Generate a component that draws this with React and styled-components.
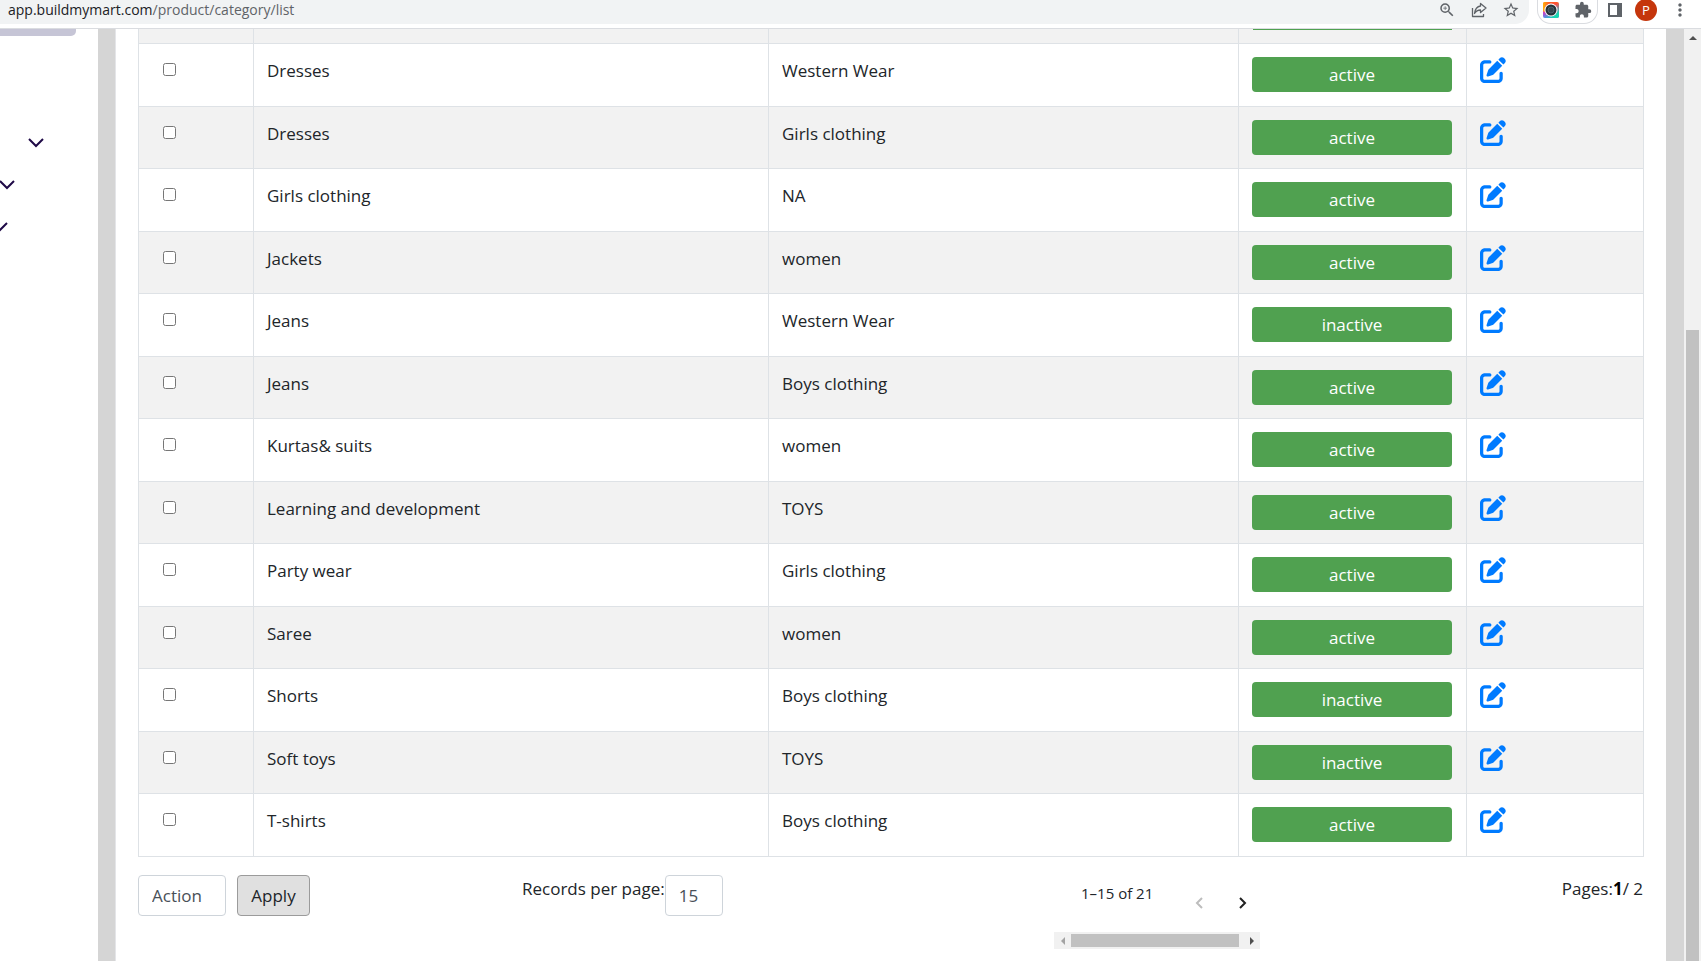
import React from "react";
import styled, { createGlobalStyle } from "styled-components";
import { MdZoomIn, MdStarBorder, MdExtension, MdMoreVert } from "react-icons/md";
import { FaPenToSquare } from "react-icons/fa6";

const GlobalStyle = createGlobalStyle`
  *, *::before, *::after { box-sizing: border-box; }
  body {
    margin: 0;
    background: #fff;
    color: #212529;
    font-family: "Open Sans", "Noto Sans", sans-serif;
    font-size: 17px;
    line-height: 27px;
  }
  button, select, input { font: inherit; }
`;

const Page = styled.div`
  display: flex;
  flex-direction: column;
  height: 100vh;
  overflow: hidden;
`;

const Toolbar = styled.header`
  display: flex;
  flex: none;
  align-items: flex-start;
  height: 29px;
  border-bottom: 1px solid #dadce0;
  color: #5f6368;
`;

const AddressBar = styled.div`
  display: flex;
  flex: 1;
  align-items: center;
  justify-content: space-between;
  height: 24px;
  padding: 0 9px 4px 8px;
  background: #f1f3f4;
  border-bottom-right-radius: 14px;
  font-size: 14px;
  line-height: 20px;
`;

const Host = styled.span`
  color: #202124;
`;

const IconGroup = styled.div`
  display: flex;
  align-items: center;
  gap: ${(p) => p.$gap}px;
`;

const IconButton = styled.button`
  display: flex;
  flex: none;
  padding: 0;
  border: 0;
  background: none;
  color: inherit;
`;

const ExtensionPill = styled.div`
  display: flex;
  align-items: center;
  gap: 15px;
  height: 24px;
  margin-left: 8px;
  padding: 0 5px 4px;
  border: 1px solid #dadce0;
  border-top: 0;
  border-radius: 0 0 14px 14px;
`;

const WindowActions = styled.div`
  display: flex;
  align-items: center;
  height: 20px;
  gap: 13px;
  padding: 0 11px 0 10px;
`;

const Avatar = styled.button`
  width: 22px;
  height: 22px;
  padding: 0;
  border: 0;
  border-radius: 50%;
  background: #c5360c;
  color: #fff;
  font-size: 13px;
  line-height: 20px;
`;

const Workspace = styled.div`
  display: flex;
  flex: 1;
  min-height: 0;
  background: #d5d5d5;
`;

const Sidebar = styled.nav`
  flex: none;
  width: 98px;
  overflow: hidden;
  background: #fff;
`;

const ActiveItem = styled.div`
  width: 76px;
  height: 7px;
  margin-bottom: 86px;
  background: #c6c5d6;
  border-bottom-right-radius: 5px;
`;

const MenuToggle = styled.button`
  display: flex;
  align-items: center;
  justify-content: flex-end;
  width: ${(p) => p.$width}px;
  height: 42px;
  padding: 0;
  border: 0;
  background: none;
  color: #1f0a47;
`;

const MenuChevron = styled.svg`
  flex: none;
  width: 16px;
  height: 10px;
`;

const Card = styled.main`
  flex: 1;
  min-width: 0;
  margin: 0 18px 0 17px;
  padding: 0 22px;
  overflow: hidden;
  background: #fff;
  border-left: 1px solid #e4e5e8;
  border-right: 1px solid #fff;
`;

const Table = styled.table`
  width: 100%;
  table-layout: fixed;
  border-collapse: separate;
  border-spacing: 0;
  border-left: 1px solid #dee2e6;
`;

const Row = styled.tr`
  height: 62px;
  &:nth-child(even) { height: 63px; }
  &:nth-child(odd) { background: #f2f2f2; }
`;

const CutRow = styled(Row)`
  height: 15px !important;
`;

const Cell = styled.td`
  padding: ${(p) => p.$pad || "13px"};
  vertical-align: top;
  border-right: 1px solid #dee2e6;
  border-bottom: 1px solid #dee2e6;
`;

const CutBadge = styled.div`
  height: 1px;
  margin: 0 1px;
  background: #50a150;
`;

const Checkbox = styled.input`
  display: block;
  width: 13px;
  height: 13px;
  margin: 0;
`;

const StatusButton = styled.button`
  display: flex;
  justify-content: center;
  width: 100%;
  height: 35px;
  padding: 4px 0;
  border: 0;
  border-radius: 4px;
  background: #50a150;
  color: #fff;
  line-height: 27px;
`;

const EditLink = styled.a`
  display: block;
  width: 26px;
  color: #007bff;
`;

const Footer = styled.footer`
  display: grid;
  grid-template-columns: 384fr 532fr 206fr 383fr;
  align-items: start;
  padding-top: 18px;
`;

const Bulk = styled.div`
  display: flex;
  gap: 11px;
`;

const Select = styled.select`
  width: ${(p) => p.$width}px;
  height: 41px;
  padding: 0 0 0 13px;
  appearance: none;
  border: 1px solid #ced4da;
  border-radius: 4px;
  background: #fff;
  color: #495057;
`;

const ApplyButton = styled.button`
  width: 73px;
  height: 41px;
  padding: 0;
  border: 1px solid #9b9b9b;
  border-radius: 4px;
  background: #e0e0e0;
  color: #212529;
`;

const PageSize = styled.div`
  display: flex;
`;

const Pager = styled.div`
  display: flex;
  flex-direction: column;
`;

const PagerRow = styled.div`
  display: flex;
  align-items: flex-start;
  height: 57px;
  padding: 5px 13px 0 27px;
`;

const Range = styled.span`
  flex: 1;
  font-size: 15px;
  white-space: nowrap;
`;

const PagerButtons = styled(IconGroup)`
  padding-top: 17px;
`;

const Track = styled.div`
  display: flex;
  align-items: center;
  height: 17px;
  background: #f1f1f1;
`;

const ArrowBox = styled.span`
  display: flex;
  flex: none;
  align-items: center;
  justify-content: center;
  width: 17px;
  height: 17px;
`;

const HorizontalThumb = styled.div`
  flex: 1;
  height: 13px;
  margin-right: 4px;
  background: #c1c1c1;
`;

const PageCount = styled.div`
  text-align: right;
`;

const Current = styled.b`
  color: #000;
`;

const VerticalTrack = styled.div`
  display: flex;
  flex: none;
  flex-direction: column;
  align-items: center;
  gap: 284px;
  width: 17px;
  background: #f1f1f1;
`;

const VerticalThumb = styled.div`
  flex: 1;
  width: 13px;
  background: #c1c1c1;
`;

const rows = [
  ["Dresses", "Western Wear", "active"],
  ["Dresses", "Girls clothing", "active"],
  ["Girls clothing", "NA", "active"],
  ["Jackets", "women", "active"],
  ["Jeans", "Western Wear", "inactive"],
  ["Jeans", "Boys clothing", "active"],
  ["Kurtas& suits", "women", "active"],
  ["Learning and development", "TOYS", "active"],
  ["Party wear", "Girls clothing", "active"],
  ["Saree", "women", "active"],
  ["Shorts", "Boys clothing", "inactive"],
  ["Soft toys", "TOYS", "inactive"],
  ["T-shirts", "Boys clothing", "active"],
];

const columnWidths = [115, 515, 470, 228, 177];

function Chevron() {
  return (
    <MenuChevron viewBox="0 0 16 10" fill="none" stroke="currentColor" strokeWidth="2">
      <path d="M1 1l7 7 7-7" />
    </MenuChevron>
  );
}

function ShareIcon() {
  return (
    <svg width="16" height="16" viewBox="0 0 16 16" fill="none" stroke="currentColor" strokeWidth="1.3" strokeLinejoin="round">
      <path d="M1.500 6v8.500h11V12" />
      <path d="M9.500 1.500L15 6l-5.500 4.500V8C7 8 5 9 3.500 11.500 4 7.500 6 4.500 9.500 4z" />
    </svg>
  );
}

function CameraIcon() {
  return (
    <svg width="16" height="16" viewBox="0 0 16 16">
      <defs>
        <linearGradient id="rainbow" x1="0" y1="0" x2="0" y2="1">
          <stop offset="0" stopColor="#ff5a1f" />
          <stop offset="0.500" stopColor="#f0329b" />
          <stop offset="1" stopColor="#6f6cff" />
        </linearGradient>
        <linearGradient id="left-side" x1="0" y1="0" x2="1" y2="0">
          <stop offset="0" stopColor="#ffb300" />
          <stop offset="0.400" stopColor="#ffb300" stopOpacity="0" />
        </linearGradient>
        <linearGradient id="corner" x1="0.500" y1="0.400" x2="1" y2="1">
          <stop offset="0" stopColor="#18d8b0" stopOpacity="0" />
          <stop offset="0.700" stopColor="#18d8b0" />
        </linearGradient>
      </defs>
      <rect width="16" height="16" rx="2" fill="url(#rainbow)" />
      <rect width="16" height="10" rx="2" fill="url(#left-side)" />
      <rect width="16" height="16" rx="2" fill="url(#corner)" />
      <circle cx="8" cy="8" r="6.500" fill="#fff" />
      <circle cx="8" cy="8" r="5.500" fill="#263238" />
      <circle cx="8" cy="8" r="3" fill="#37474f" stroke="#546e7a" strokeWidth="0.700" />
    </svg>
  );
}

function PanelIcon() {
  return (
    <svg width="14" height="14" viewBox="0 0 14 14">
      <path fill="currentColor" fillRule="evenodd" d="M0 0h14v14H0zM2 2v10h7V2z" />
    </svg>
  );
}

function PagerChevron({ flip, color }) {
  return (
    <svg width="8" height="12" viewBox="0 0 8 12" fill="none" stroke={color} strokeWidth="2">
      <path d={flip ? "M1 1l5 5-5 5" : "M7 1L2 6l5 5"} />
    </svg>
  );
}

function Triangle({ points, color }) {
  return (
    <svg width="8" height="8" viewBox="0 0 8 8">
      <polygon points={points} fill={color} />
    </svg>
  );
}

export default function App() {
  return (
    <Page>
      <GlobalStyle />
      <Toolbar>
        <AddressBar>
          <span>
            <Host>app.buildmymart.com</Host>/product/category/list
          </span>
          <IconGroup $gap={15}>
            <IconButton aria-label="Zoom"><MdZoomIn size={18} /></IconButton>
            <IconButton aria-label="Share"><ShareIcon /></IconButton>
            <IconButton aria-label="Bookmark"><MdStarBorder size={18} /></IconButton>
          </IconGroup>
        </AddressBar>
        <ExtensionPill>
          <IconButton aria-label="Capture"><CameraIcon /></IconButton>
          <IconButton aria-label="Extensions"><MdExtension size={18} /></IconButton>
        </ExtensionPill>
        <WindowActions>
          <IconButton aria-label="Side panel"><PanelIcon /></IconButton>
          <Avatar>P</Avatar>
          <IconButton aria-label="Menu"><MdMoreVert size={20} /></IconButton>
        </WindowActions>
      </Toolbar>
      <Workspace>
        <Sidebar>
          <ActiveItem />
          {[44, 15, 8].map((width) => (
            <MenuToggle key={width} $width={width} aria-label="Expand menu">
              <Chevron />
            </MenuToggle>
          ))}
        </Sidebar>
        <Card>
          <Table>
            <colgroup>
              {columnWidths.map((width) => (
                <col key={width} width={width} />
              ))}
            </colgroup>
            <tbody>
              <CutRow>
                <Cell $pad="0" />
                <Cell $pad="0" />
                <Cell $pad="0" />
                <Cell $pad="0 13px"><CutBadge /></Cell>
                <Cell $pad="0" />
              </CutRow>
              {rows.map(([name, parent, status], i) => (
                <Row key={i}>
                  <Cell $pad="19px 24px 0">
                    <Checkbox type="checkbox" aria-label={name} />
                  </Cell>
                  <Cell>{name}</Cell>
                  <Cell>{parent}</Cell>
                  <Cell $pad="13px 14px 0 13px">
                    <StatusButton>{status}</StatusButton>
                  </Cell>
                  <Cell>
                    <EditLink href="#edit" aria-label={"Edit " + name}>
                      <FaPenToSquare size={26} />
                    </EditLink>
                  </Cell>
                </Row>
              ))}
            </tbody>
          </Table>
          <Footer>
            <Bulk>
              <Select $width={88} aria-label="Action">
                <option>Action</option>
              </Select>
              <ApplyButton>Apply</ApplyButton>
            </Bulk>
            <PageSize>
              <label htmlFor="page-size">Records per page:</label>
              <Select id="page-size" $width={58}>
                <option>15</option>
              </Select>
            </PageSize>
            <Pager>
              <PagerRow>
                <Range>1–15 of 21</Range>
                <PagerButtons $gap={36}>
                  <IconButton aria-label="Previous page"><PagerChevron color="#bdbdbd" /></IconButton>
                  <IconButton aria-label="Next page"><PagerChevron flip color="#212121" /></IconButton>
                </PagerButtons>
              </PagerRow>
              <Track>
                <ArrowBox><Triangle points="6,0 2,4 6,8" color="#a3a3a3" /></ArrowBox>
                <HorizontalThumb />
                <ArrowBox><Triangle points="2,0 6,4 2,8" color="#505050" /></ArrowBox>
              </Track>
            </Pager>
            <PageCount>
              Pages:<Current>1</Current>/ 2
            </PageCount>
          </Footer>
        </Card>
        <VerticalTrack>
          <ArrowBox><Triangle points="0,6 4,2 8,6" color="#505050" /></ArrowBox>
          <VerticalThumb />
        </VerticalTrack>
      </Workspace>
    </Page>
  );
}
